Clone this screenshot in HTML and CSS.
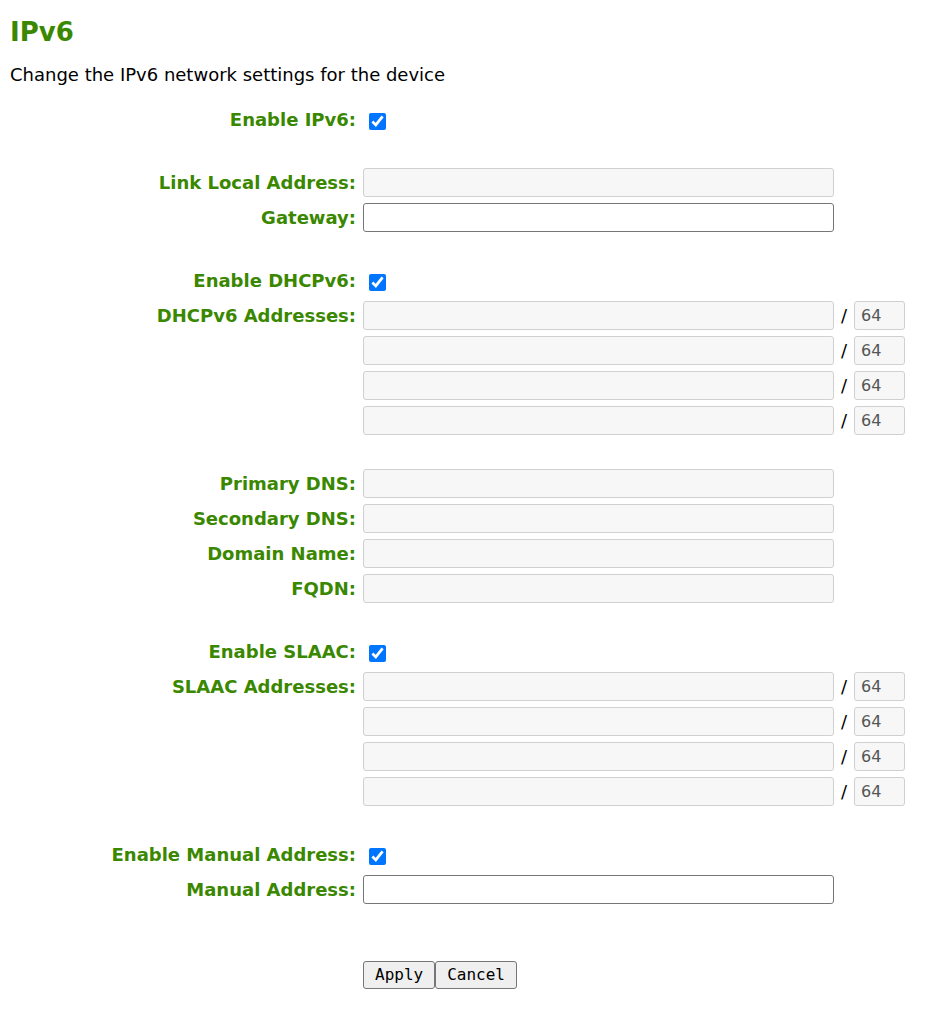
FILE: index.html
```html
<!DOCTYPE html>
<html lang="en">
<head>
    <meta charset="UTF-8">
    <title>IPv6</title>
    <link rel="stylesheet" href="styles.css">
</head>
<body>
    <h2 class="title">IPv6</h2>
    <p class="intro">Change the IPv6 network settings for the device</p>

    <form class="settings">
        <table class="grid">
            <tr>
                <td class="label">Enable IPv6:</td>
                <td><input type="checkbox" checked></td>
            </tr>
            <tr class="spacer"><td colspan="2"></td></tr>
            <tr>
                <td class="label">Link Local Address:</td>
                <td><input type="text" class="field" disabled></td>
            </tr>
            <tr>
                <td class="label">Gateway:</td>
                <td><input type="text" class="field"></td>
            </tr>
            <tr class="spacer"><td colspan="2"></td></tr>
            <tr>
                <td class="label">Enable DHCPv6:</td>
                <td><input type="checkbox" checked></td>
            </tr>
            <tr>
                <td class="label">DHCPv6 Addresses:</td>
                <td><input type="text" class="field" disabled><span class="slash">/</span><input type="text" class="prefix" value="64" disabled></td>
            </tr>
            <tr>
                <td class="label"></td>
                <td><input type="text" class="field" disabled><span class="slash">/</span><input type="text" class="prefix" value="64" disabled></td>
            </tr>
            <tr>
                <td class="label"></td>
                <td><input type="text" class="field" disabled><span class="slash">/</span><input type="text" class="prefix" value="64" disabled></td>
            </tr>
            <tr>
                <td class="label"></td>
                <td><input type="text" class="field" disabled><span class="slash">/</span><input type="text" class="prefix" value="64" disabled></td>
            </tr>
            <tr class="spacer"><td colspan="2"></td></tr>
            <tr>
                <td class="label">Primary DNS:</td>
                <td><input type="text" class="field" disabled></td>
            </tr>
            <tr>
                <td class="label">Secondary DNS:</td>
                <td><input type="text" class="field" disabled></td>
            </tr>
            <tr>
                <td class="label">Domain Name:</td>
                <td><input type="text" class="field" disabled></td>
            </tr>
            <tr>
                <td class="label">FQDN:</td>
                <td><input type="text" class="field" disabled></td>
            </tr>
            <tr class="spacer"><td colspan="2"></td></tr>
            <tr>
                <td class="label">Enable SLAAC:</td>
                <td><input type="checkbox" checked></td>
            </tr>
            <tr>
                <td class="label">SLAAC Addresses:</td>
                <td><input type="text" class="field" disabled><span class="slash">/</span><input type="text" class="prefix" value="64" disabled></td>
            </tr>
            <tr>
                <td class="label"></td>
                <td><input type="text" class="field" disabled><span class="slash">/</span><input type="text" class="prefix" value="64" disabled></td>
            </tr>
            <tr>
                <td class="label"></td>
                <td><input type="text" class="field" disabled><span class="slash">/</span><input type="text" class="prefix" value="64" disabled></td>
            </tr>
            <tr>
                <td class="label"></td>
                <td><input type="text" class="field" disabled><span class="slash">/</span><input type="text" class="prefix" value="64" disabled></td>
            </tr>
            <tr class="spacer"><td colspan="2"></td></tr>
            <tr>
                <td class="label">Enable Manual Address:</td>
                <td><input type="checkbox" checked></td>
            </tr>
            <tr>
                <td class="label">Manual Address:</td>
                <td><input type="text" class="field"></td>
            </tr>
            <tr class="spacer big"><td colspan="2"></td></tr>
            <tr>
                <td class="label"></td>
                <td><button type="button" class="btn">Apply</button><button type="button" class="btn">Cancel</button></td>
            </tr>
        </table>
    </form>
</body>
</html>
```

FILE: styles.css
```css
body {
    font-family: "DejaVu Sans", Verdana, sans-serif;
    font-size: 18px;
    margin: 8px 10px;
    color: #000;
    background: #fff;
}

.title {
    color: #3a8700;
    font-size: 26px;
    line-height: 30px;
    font-weight: bold;
    margin: 9px 0 0;
}

.intro {
    line-height: 22px;
    margin: 17px 0 16px;
}

.grid {
    border-collapse: collapse;
}

.grid td {
    padding: 0;
    height: 35px;
    vertical-align: middle;
    white-space: nowrap;
}

.grid .label {
    width: 346px;
    text-align: right;
    padding-right: 7px;
    color: #3a8700;
    font-weight: bold;
}

.grid .spacer td {
    height: 28px;
}

.grid .spacer.big td {
    height: 50px;
}

input[type="checkbox"] {
    width: 17px;
    height: 17px;
    margin: 0 0 0 6px;
    vertical-align: middle;
    accent-color: #0075ff;
}

.field,
.prefix {
    box-sizing: border-box;
    height: 29px;
    border: 1px solid #767676;
    border-radius: 3px;
    background: #fff;
    padding: 0 6px;
    font-family: "DejaVu Sans", Verdana, sans-serif;
    font-size: 16px;
    vertical-align: middle;
    margin: 0;
}

.field {
    width: 471px;
}

.prefix {
    width: 51px;
    color: #555;
}

.field:disabled,
.prefix:disabled {
    background: #f7f7f7;
    border-color: #d0d0d0;
}

.slash {
    display: inline-block;
    width: 20px;
    text-align: center;
    vertical-align: middle;
}

.btn {
    font-family: "DejaVu Sans Mono", "Liberation Mono", monospace;
    font-size: 16px;
    height: 28px;
    padding: 0 11px;
    margin: 0;
    background: #efefef;
    border: 1px solid #767676;
    border-radius: 3px;
    color: #000;
    vertical-align: middle;
}
```
